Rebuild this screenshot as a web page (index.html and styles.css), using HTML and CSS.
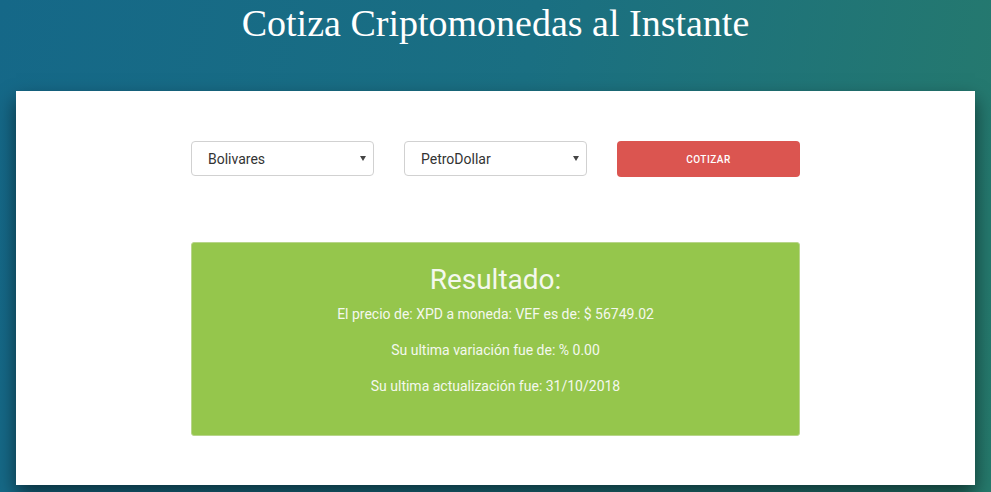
FILE: index.html
```html
<!DOCTYPE html>
<html lang="es">
<head>
<meta charset="utf-8">
<title>Cotiza Criptomonedas</title>
<link rel="stylesheet" href="styles.css">
</head>
<body>
<header class="header">
  <h1 class="title">Cotiza Criptomonedas al Instante</h1>
</header>
<main class="card">
  <form class="form-row">
    <div class="select-wrap">
      <select class="select"><option>Bolivares</option></select>
    </div>
    <div class="select-wrap">
      <select class="select"><option>PetroDollar</option></select>
    </div>
    <button type="button" class="btn">Cotizar</button>
  </form>
  <section class="result">
    <h2 class="result-title">Resultado:</h2>
    <p class="result-line">El precio de: XPD a moneda: VEF es de: $ 56749.02</p>
    <p class="result-line">Su ultima variación fue de: % 0.00</p>
    <p class="result-line">Su ultima actualización fue: 31/10/2018</p>
  </section>
</main>
</body>
</html>
```
FILE: styles.css
```css
* { box-sizing: border-box; }
html, body { height: 100%; }
body {
  margin: 0;
  overflow: hidden;
  font-family: Roboto, "Liberation Sans", sans-serif;
  background: linear-gradient(100deg, #156888 0%, #1a6f82 50%, #267a6c 100%);
}
.header {
  height: 91px;
  display: flex;
  justify-content: center;
}
.title {
  margin: 0;
  padding-top: 1px;
  font-family: "Liberation Serif", "DejaVu Serif", serif;
  font-weight: normal;
  font-size: 38px;
  line-height: 44px;
  color: #fff;
}
.card {
  margin: 0 16px;
  height: 394px;
  background: #fff;
  padding-top: 50px;
  box-shadow: 0 9px 18px rgba(0, 0, 0, 0.55);
}
.form-row {
  width: 609px;
  margin: 0 auto;
  display: grid;
  grid-template-columns: 183px 183px 183px;
  column-gap: 30px;
}
.select-wrap { position: relative; }
.select {
  width: 100%;
  height: 35px;
  border: 1px solid #d1d1d1;
  border-radius: 4px;
  background: #fff;
  padding: 0 16px;
  font-family: Roboto, "Liberation Sans", sans-serif;
  font-size: 14px;
  color: #333;
  -webkit-appearance: none;
  appearance: none;
}
.select-wrap::after {
  content: "";
  position: absolute;
  right: 8px;
  top: 15px;
  border-left: 3px solid transparent;
  border-right: 3px solid transparent;
  border-top: 5px solid #444;
}
.btn {
  height: 36px;
  border: none;
  border-radius: 4px;
  background: #db5550;
  color: #fff;
  font-family: Roboto, "Liberation Sans", sans-serif;
  font-weight: 500;
  font-size: 10px;
  letter-spacing: 0.5px;
  text-transform: uppercase;
}
.result {
  width: 609px;
  height: 194px;
  margin: 65px auto 0;
  background: #95c64c;
  border: 1px solid #b8d58a;
  border-radius: 3px;
  padding-top: 19px;
  text-align: center;
  color: #f4f8ee;
}
.result-title {
  margin: 0 0 6px;
  font-weight: 400;
  font-size: 28px;
  line-height: 36px;
}
.result-line {
  margin: 0 0 16px;
  font-size: 14px;
  line-height: 20px;
}
```
